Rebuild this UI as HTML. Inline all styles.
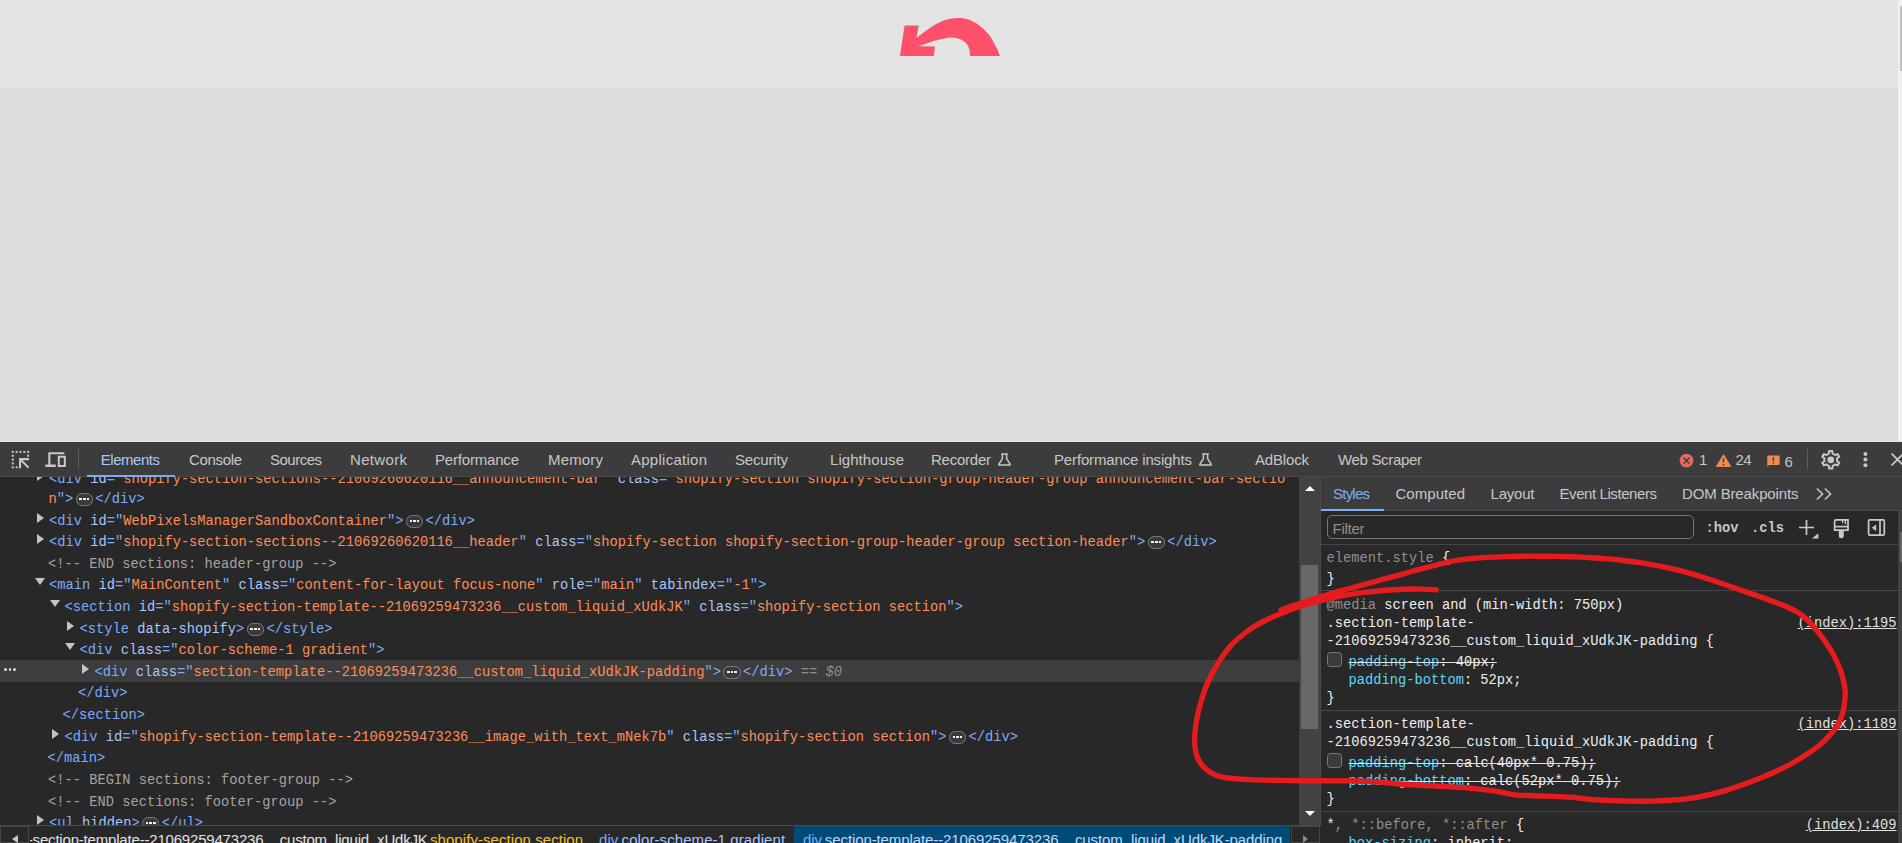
<!DOCTYPE html>
<html><head><meta charset="utf-8"><title>DevTools</title>
<style>
html,body{margin:0;padding:0;width:1902px;height:843px;overflow:hidden;background:#282828;}
body{position:relative;font-family:"Liberation Sans",sans-serif;}
.abs{position:absolute}
.tab{position:absolute;white-space:nowrap;line-height:20px;height:20px;font-family:"Liberation Sans",sans-serif;}
.ln{position:absolute;white-space:pre;font-family:"Liberation Mono",monospace;font-size:13.74px;line-height:22px;height:22px;color:#7cacf8;}
.t{color:#7cacf8}.an{color:#a8c7fa}.av{color:#fe8d59}.cm{color:#a3a3a3}.w{color:#e3e3e3}.g{color:#8f8f8f}
.pn{color:#5cd5fb}
.st{text-decoration:line-through;text-decoration-color:#e0e0e0}
.el{display:inline-block;position:relative;width:22.1px;height:0;vertical-align:baseline}
.el b{position:absolute;left:2.4px;top:-9.4px;width:17.4px;height:12.4px;box-sizing:border-box;border:1px solid #7a7a7a;border-radius:6.2px;background:#3a3a3a}
.el i{position:absolute;top:4.2px;width:2.5px;height:2px;background:#f0f0f0}
.tri{position:absolute;width:0;height:0;border-style:solid}
.sl{position:absolute;white-space:pre;font-family:"Liberation Mono",monospace;font-size:13.74px;line-height:18px;height:18px;color:#eeeeee;}
.lk{position:absolute;white-space:pre;font-family:"Liberation Mono",monospace;font-size:13.74px;line-height:18px;height:18px;color:#e0e0e0;text-decoration:underline;}
.cb{position:absolute;width:15px;height:15px;box-sizing:border-box;border:1.3px solid #787878;border-radius:3.5px;background:#3b3b3b}
.sep{position:absolute;height:1px;background:#454545}
</style></head><body>

<div class="abs" style="left:0;top:0;width:1898px;height:88px;background:#e3e3e3"></div>
<div class="abs" style="left:0;top:88px;width:1898px;height:354px;background:#dcdcdc"></div>
<div class="abs" style="left:1898px;top:0;width:4px;height:442px;background:#f1f1f1"></div>
<div class="abs" style="left:1900px;top:6px;width:2px;height:65px;background:#c1c1c1"></div>
<svg class="abs" style="left:895px;top:10px" width="112" height="52" viewBox="895 10 112 52">
<path d="M899.9 55.9 L904.6 25.4 L918.6 25.4 L916.5 37.9  C918.0 36.8 922.3 33.3 925.6 31.0 C928.9 28.7 932.8 25.9 936.3 24.0 C939.8 22.1 943.3 20.5 946.9 19.5 C950.5 18.5 954.0 18.0 957.6 18.0 C961.2 18.0 964.7 18.4 968.3 19.6 C971.9 20.8 975.9 22.9 979.3 25.4 C982.7 27.9 986.0 31.1 988.8 34.6 C991.5 38.1 993.9 43.1 995.8 46.6 C997.7 50.1 999.3 54.4 1000.0 55.9 L970.1 55.9  C970.0 54.9 969.9 51.8 969.4 49.8 C968.9 47.8 968.1 45.8 966.9 44.1 C965.6 42.5 964.0 41.0 961.9 39.9 C959.8 38.8 956.6 38.0 954.1 37.7 C951.6 37.4 949.9 37.5 946.9 37.9 C943.9 38.3 939.8 39.2 936.3 40.2 C932.8 41.2 928.6 42.8 925.6 43.8 C922.6 44.8 919.7 45.9 918.5 46.3 L935 46.4 L933.8 55.9 Z" fill="#fe4f6b"/>
</svg>
<div class="abs" style="left:0;top:442px;width:1902px;height:35px;background:#3c3c3c"></div>
<div class="abs" style="left:0;top:441px;width:1902px;height:1px;background:#e8e8e8"></div>
<svg class="abs" style="left:8px;top:446px" width="26" height="26" viewBox="8 446 26 26" fill="#c9c9c9"><rect x="11.75" y="450.90" width="2" height="2"/><rect x="15.60" y="450.90" width="2" height="2"/><rect x="19.45" y="450.90" width="2" height="2"/><rect x="23.30" y="450.90" width="2" height="2"/><rect x="27.15" y="450.90" width="2" height="2"/><rect x="11.75" y="454.75" width="2" height="2"/><rect x="11.75" y="458.60" width="2" height="2"/><rect x="11.75" y="462.40" width="2" height="2"/><rect x="11.75" y="466.30" width="2" height="2"/><rect x="27.15" y="454.75" width="2" height="2"/><rect x="15.60" y="466.30" width="2" height="2"/><path d="M19 458.1H29.1V460.2H22.6L29.3 466.9L27.9 468.4L21.1 461.6V468.2H19Z"/></svg>
<svg class="abs" style="left:44px;top:448px" width="24" height="22" viewBox="44 448 24 22" fill="#c9c9c9"><path d="M48.3 452.2H64.4V454.2H50.4V464.6H55.75V467H45.4V464.6H48.3Z"/><path fill-rule="evenodd" d="M57.8 455.7H65.8V467.1H57.8ZM59.8 457.7V465.1H63.8V457.7Z"/></svg>
<div class="abs" style="left:78px;top:449px;width:1px;height:20px;background:#5c5c5c"></div>
<div class="abs" style="left:87px;top:475px;width:88px;height:2px;z-index:5;background:#7cacf8"></div>
<div class="tab" style="left:100.7px;top:450px;color:#a8c7fa;font-size:15px;letter-spacing:-0.447px">Elements</div>
<div class="tab" style="left:189px;top:450px;color:#c7c7c7;font-size:15px;letter-spacing:-0.342px">Console</div>
<div class="tab" style="left:270px;top:450px;color:#c7c7c7;font-size:15px;letter-spacing:-0.505px">Sources</div>
<div class="tab" style="left:350px;top:450px;color:#c7c7c7;font-size:15px;letter-spacing:0.330px">Network</div>
<div class="tab" style="left:435px;top:450px;color:#c7c7c7;font-size:15px;letter-spacing:-0.188px">Performance</div>
<div class="tab" style="left:548px;top:450px;color:#c7c7c7;font-size:15px;letter-spacing:0.166px">Memory</div>
<div class="tab" style="left:631px;top:450px;color:#c7c7c7;font-size:15px;letter-spacing:0.261px">Application</div>
<div class="tab" style="left:735px;top:450px;color:#c7c7c7;font-size:15px;letter-spacing:-0.170px">Security</div>
<div class="tab" style="left:830px;top:450px;color:#c7c7c7;font-size:15px;letter-spacing:0.066px">Lighthouse</div>
<div class="tab" style="left:931px;top:450px;color:#c7c7c7;font-size:15px;letter-spacing:-0.243px">Recorder</div>
<div class="tab" style="left:1054px;top:450px;color:#c7c7c7;font-size:15px;letter-spacing:-0.153px">Performance insights</div>
<div class="tab" style="left:1255px;top:450px;color:#c7c7c7;font-size:15px;letter-spacing:-0.172px">AdBlock</div>
<div class="tab" style="left:1338px;top:450px;color:#c7c7c7;font-size:15px;letter-spacing:-0.327px">Web Scraper</div>
<svg class="abs" style="left:996.6px;top:451px" width="16" height="17" viewBox="0 0 16 17" fill="none" stroke="#c9c9c9" stroke-width="1.5" stroke-linejoin="round"><path d="M4.2 3h6.6M5.4 3v4.6L1.9 13.2a.6.6 0 0 0 .5.9h10.2a.6.6 0 0 0 .5-.9L9.6 7.6V3"/></svg>
<svg class="abs" style="left:1198.2px;top:451px" width="16" height="17" viewBox="0 0 16 17" fill="none" stroke="#c9c9c9" stroke-width="1.5" stroke-linejoin="round"><path d="M4.2 3h6.6M5.4 3v4.6L1.9 13.2a.6.6 0 0 0 .5.9h10.2a.6.6 0 0 0 .5-.9L9.6 7.6V3"/></svg>
<svg class="abs" style="left:1676px;top:450px" width="120" height="22" viewBox="1676 450 120 22">
<circle cx="1686.5" cy="460.6" r="6.9" fill="#e46962"/>
<path d="M1683.7 457.8l5.6 5.6M1689.3 457.8l-5.6 5.6" stroke="#3c3c3c" stroke-width="1.35" fill="none"/>
<path d="M1723.55 454.6L1730.8 466.5H1716.3Z" fill="#f28b50" stroke="#f28b50" stroke-width="0.8" stroke-linejoin="round"/>
<path d="M1723.5 458.3v4" stroke="#3c3c3c" stroke-width="1.5"/><circle cx="1723.5" cy="464.6" r="0.9" fill="#3c3c3c"/>
<path d="M1767.3 456.4a0.9 0.9 0 0 1 .9-.9h10.5a0.9 0.9 0 0 1 .9.9v7.7a0.9 0.9 0 0 1-.9.9h-9.7l-1.7 2z" fill="#f28b50"/>
<path d="M1773.4 457.3v4" stroke="#3c3c3c" stroke-width="1.5"/><circle cx="1773.4" cy="463" r="0.85" fill="#3c3c3c"/>
</svg>
<div class="tab" style="left:1699px;top:450px;color:#c7c7c7;font-size:15px">1</div>
<div class="tab" style="left:1735.5px;top:450px;color:#c7c7c7;font-size:15px;letter-spacing:-0.6px">24</div>
<div class="tab" style="left:1784.5px;top:452px;color:#c7c7c7;font-size:15px">6</div>
<div class="abs" style="left:1807px;top:449px;width:1px;height:20px;background:#5e5e5e"></div>
<svg class="abs" style="left:1818.8px;top:447.75px" width="23.52" height="23.52" viewBox="0 0 24 24"><path fill="#c9c9c9" fill-rule="evenodd" d="M19.43 12.98c.04-.32.07-.64.07-.98 0-.34-.03-.66-.07-.98l2.11-1.65c.19-.15.24-.42.12-.64l-2-3.46c-.09-.16-.26-.25-.44-.25-.06 0-.12.01-.17.03l-2.49 1c-.52-.4-1.08-.73-1.69-.98l-.38-2.65C14.46 2.18 14.25 2 14 2h-4c-.25 0-.46.18-.49.42l-.38 2.65c-.61.25-1.17.59-1.69.98l-2.49-1c-.06-.02-.12-.03-.18-.03-.17 0-.34.09-.43.25l-2 3.46c-.13.22-.07.49.12.64l2.11 1.65c-.04.32-.07.65-.07.98 0 .33.03.66.07.98l-2.11 1.65c-.19.15-.24.42-.12.64l2 3.46c.09.16.26.25.44.25.06 0 .12-.01.17-.03l2.49-1c.52.4 1.08.73 1.69.98l.38 2.65c.03.24.24.42.49.42h4c.25 0 .46-.18.49-.42l.38-2.65c.61-.25 1.17-.59 1.69-.98l2.49 1c.06.02.12.03.18.03.17 0 .34-.09.43-.25l2-3.46c.12-.22.07-.49-.12-.64l-2.11-1.65zm-1.98-1.71c.04.31.05.52.05.73 0 .21-.02.43-.05.73l-.14 1.13.89.7 1.08.84-.7 1.21-1.27-.51-1.04-.42-.9.68c-.43.32-.84.56-1.25.73l-1.06.43-.16 1.13-.2 1.35h-1.4l-.19-1.35-.16-1.13-1.06-.43c-.43-.18-.83-.41-1.23-.71l-.91-.7-1.06.43-1.27.51-.7-1.21 1.08-.84.89-.7-.14-1.13c-.03-.31-.05-.54-.05-.74s.02-.43.05-.73l.14-1.13-.89-.7-1.08-.84.7-1.21 1.27.51 1.04.42.9-.68c.43-.32.84-.56 1.25-.73l1.06-.43.16-1.13.2-1.35h1.39l.19 1.35.16 1.13 1.06.43c.43.18.83.41 1.23.71l.91.7 1.06-.43 1.27-.51.7 1.21-1.07.85-.89.7.14 1.13z"/><circle cx="12" cy="12" r="3.45" fill="#c9c9c9"/></svg>
<svg class="abs" style="left:1860px;top:450px" width="12" height="20" viewBox="1860 450 12 20" fill="#c7c7c7"><circle cx="1865.4" cy="453.9" r="2"/><circle cx="1865.4" cy="459.6" r="2"/><circle cx="1865.4" cy="465.3" r="2"/></svg>
<svg class="abs" style="left:1888px;top:450px" width="14" height="20" viewBox="1888 450 14 20"><path d="M1891.6 453.6l11.8 11.8M1903.4 453.6l-11.8 11.8" stroke="#c9c9c9" stroke-width="1.7" fill="none"/></svg>
<div class="abs" style="left:0;top:476px;width:1902px;height:1px;background:#4a4a4a"></div>
<div class="abs" style="left:0;top:477px;width:1299px;height:349px;overflow:hidden">
<div class="abs" style="left:0;top:183.00px;width:1299px;height:22px;background:#3d3d3d"></div>
<div class="abs" style="left:4px;top:191.44px;width:14px;height:3px"><i class="abs" style="left:0;top:0;width:2.5px;height:2.5px;background:#dcdcdc;border-radius:2px"></i><i class="abs" style="left:4.5px;top:0;width:2.5px;height:2.5px;background:#dcdcdc;border-radius:2px"></i><i class="abs" style="left:9px;top:0;width:2.5px;height:2.5px;background:#dcdcdc;border-radius:2px"></i></div>
<div class="ln" style="left:49px;top:-7.96px"><span class="t">&lt;div </span><span class="an">id</span><span class="t">=&quot;</span><span class="av">shopify-section-sections--21069260620116__announcement-bar</span><span class="t">&quot; </span><span class="an">class</span><span class="t">=&quot;</span><span class="av">shopify-section shopify-section-group-header-group announcement-bar-sectio</span></div>
<div class="tri" style="left:36.6px;top:-5.80px;border-width:5.15px 0 5.15px 7.8px;border-color:transparent transparent transparent #c4c4c4"></div>
<div class="ln" style="left:48.5px;top:11.64px"><span class="av">n</span><span class="t">&quot;&gt;</span><span class="el"><b><i style="left:2.7px"></i><i style="left:6.4px"></i><i style="left:10.1px"></i></b></span><span class="t">&lt;/div&gt;</span></div>
<div class="ln" style="left:49px;top:33.64px"><span class="t">&lt;div</span> <span class="an">id</span><span class="t">=&quot;</span><span class="av">WebPixelsManagerSandboxContainer</span><span class="t">&quot;</span><span class="t">&gt;</span><span class="el"><b><i style="left:2.7px"></i><i style="left:6.4px"></i><i style="left:10.1px"></i></b></span><span class="t">&lt;/div&gt;</span></div>
<div class="tri" style="left:36.6px;top:35.80px;border-width:5.15px 0 5.15px 7.8px;border-color:transparent transparent transparent #c4c4c4"></div>
<div class="ln" style="left:49px;top:54.64px"><span class="t">&lt;div</span> <span class="an">id</span><span class="t">=&quot;</span><span class="av">shopify-section-sections--21069260620116__header</span><span class="t">&quot;</span> <span class="an">class</span><span class="t">=&quot;</span><span class="av">shopify-section shopify-section-group-header-group section-header</span><span class="t">&quot;</span><span class="t">&gt;</span><span class="el"><b><i style="left:2.7px"></i><i style="left:6.4px"></i><i style="left:10.1px"></i></b></span><span class="t">&lt;/div&gt;</span></div>
<div class="tri" style="left:36.6px;top:56.80px;border-width:5.15px 0 5.15px 7.8px;border-color:transparent transparent transparent #c4c4c4"></div>
<div class="ln" style="left:48px;top:76.64px"><span class="cm">&lt;!-- END sections: header-group --&gt;</span></div>
<div class="ln" style="left:49px;top:97.64px"><span class="t">&lt;main</span> <span class="an">id</span><span class="t">=&quot;</span><span class="av">MainContent</span><span class="t">&quot;</span> <span class="an">class</span><span class="t">=&quot;</span><span class="av">content-for-layout focus-none</span><span class="t">&quot;</span> <span class="an">role</span><span class="t">=&quot;</span><span class="av">main</span><span class="t">&quot;</span> <span class="an">tabindex</span><span class="t">=&quot;</span><span class="av">-1</span><span class="t">&quot;</span><span class="t">&gt;</span></div>
<div class="tri" style="left:34.7px;top:100.94px;border-width:7.4px 5.2px 0 5.2px;border-color:#c4c4c4 transparent transparent transparent"></div>
<div class="ln" style="left:64.5px;top:119.64px"><span class="t">&lt;section</span> <span class="an">id</span><span class="t">=&quot;</span><span class="av">shopify-section-template--21069259473236__custom_liquid_xUdkJK</span><span class="t">&quot;</span> <span class="an">class</span><span class="t">=&quot;</span><span class="av">shopify-section section</span><span class="t">&quot;</span><span class="t">&gt;</span></div>
<div class="tri" style="left:50.2px;top:122.94px;border-width:7.4px 5.2px 0 5.2px;border-color:#c4c4c4 transparent transparent transparent"></div>
<div class="ln" style="left:79.5px;top:141.64px"><span class="t">&lt;style</span> <span class="an">data-shopify</span><span class="t">&gt;</span><span class="el"><b><i style="left:2.7px"></i><i style="left:6.4px"></i><i style="left:10.1px"></i></b></span><span class="t">&lt;/style&gt;</span></div>
<div class="tri" style="left:67.1px;top:143.80px;border-width:5.15px 0 5.15px 7.8px;border-color:transparent transparent transparent #c4c4c4"></div>
<div class="ln" style="left:79.5px;top:162.64px"><span class="t">&lt;div</span> <span class="an">class</span><span class="t">=&quot;</span><span class="av">color-scheme-1 gradient</span><span class="t">&quot;</span><span class="t">&gt;</span></div>
<div class="tri" style="left:65.2px;top:165.94px;border-width:7.4px 5.2px 0 5.2px;border-color:#c4c4c4 transparent transparent transparent"></div>
<div class="ln" style="left:94.5px;top:184.64px"><span class="t">&lt;div</span> <span class="an">class</span><span class="t">=&quot;</span><span class="av">section-template--21069259473236__custom_liquid_xUdkJK-padding</span><span class="t">&quot;</span><span class="t">&gt;</span><span class="el"><b><i style="left:2.7px"></i><i style="left:6.4px"></i><i style="left:10.1px"></i></b></span><span class="t">&lt;/div&gt;</span><span class="g"> == </span><span class="g" style="font-style:italic">$0</span></div>
<div class="tri" style="left:82.1px;top:186.80px;border-width:5.15px 0 5.15px 7.8px;border-color:transparent transparent transparent #c4c4c4"></div>
<div class="ln" style="left:78px;top:205.64px"><span class="t">&lt;/div&gt;</span></div>
<div class="ln" style="left:62.5px;top:227.64px"><span class="t">&lt;/section&gt;</span></div>
<div class="ln" style="left:64.5px;top:249.64px"><span class="t">&lt;div</span> <span class="an">id</span><span class="t">=&quot;</span><span class="av">shopify-section-template--21069259473236__image_with_text_mNek7b</span><span class="t">&quot;</span> <span class="an">class</span><span class="t">=&quot;</span><span class="av">shopify-section section</span><span class="t">&quot;</span><span class="t">&gt;</span><span class="el"><b><i style="left:2.7px"></i><i style="left:6.4px"></i><i style="left:10.1px"></i></b></span><span class="t">&lt;/div&gt;</span></div>
<div class="tri" style="left:52.1px;top:251.80px;border-width:5.15px 0 5.15px 7.8px;border-color:transparent transparent transparent #c4c4c4"></div>
<div class="ln" style="left:47.5px;top:270.64px"><span class="t">&lt;/main&gt;</span></div>
<div class="ln" style="left:48px;top:292.64px"><span class="cm">&lt;!-- BEGIN sections: footer-group --&gt;</span></div>
<div class="ln" style="left:48px;top:314.64px"><span class="cm">&lt;!-- END sections: footer-group --&gt;</span></div>
<div class="ln" style="left:49px;top:335.64px"><span class="t">&lt;ul</span> <span class="an">hidden</span><span class="t">&gt;</span><span class="el"><b><i style="left:2.7px"></i><i style="left:6.4px"></i><i style="left:10.1px"></i></b></span><span class="t">&lt;/ul&gt;</span></div>
<div class="tri" style="left:36.6px;top:337.80px;border-width:5.15px 0 5.15px 7.8px;border-color:transparent transparent transparent #c4c4c4"></div>
</div>
<div class="abs" style="left:1299px;top:477px;width:21px;height:348px;background:#424242"></div>
<div class="abs" style="left:1301px;top:565px;width:17px;height:163.5px;background:#686868"></div>
<div class="tri" style="left:1304.5px;top:486px;border-width:0 5px 5px 5px;border-color:transparent transparent #fff transparent"></div>
<div class="tri" style="left:1304.5px;top:811px;border-width:5px 5px 0 5px;border-color:#fff transparent transparent transparent"></div>
<div class="abs" style="left:1320px;top:477px;width:1px;height:366px;background:#4a4a4a"></div>
<div class="abs" style="left:0;top:825px;width:1321px;height:1px;background:#4a4a4a"></div>
<div class="abs" style="left:0;top:826px;width:1321px;height:17px;background:#282828"></div>
<div class="abs" style="left:0;top:826px;width:29px;height:17px;background:#282828;border:1px solid #454545;box-sizing:border-box"></div>
<div class="tri" style="left:12px;top:835px;border-width:4.5px 6px 4.5px 0;border-color:transparent #c7c7c7 transparent transparent"></div>
<div class="abs" style="left:794px;top:826px;width:496px;height:17px;background:#004a77"></div>
<div class="abs" style="left:1291px;top:826px;width:29px;height:17px;background:#282828;border:1px solid #454545;box-sizing:border-box"></div>
<div class="tri" style="left:1303px;top:834.8px;border-width:4.5px 0 4.5px 5.5px;border-color:transparent transparent transparent #8a8a8a"></div>
<div class="abs" style="left:30px;top:826px;width:764px;height:17px;overflow:hidden">
<div class="tab" style="left:-2.2px;top:4px;font-size:15px;color:#e3e3e3;letter-spacing:-0.19px" id="bc1">-section-template--21069259473236__custom_liquid_xUdkJK</div>
</div>
<div class="tab" style="left:430px;top:830px;font-size:15px;letter-spacing:0.06px;color:#e3e3e3"><span style="color:#f2c230">shopify-section.section</span></div>
<div class="tab" style="left:599px;top:830px;font-size:15px;letter-spacing:0.08px;color:#e3e3e3"><span style="color:#7cacf8">div</span><span style="color:#a8c7fa">.color-scheme-1.gradient</span></div>
<div class="tab" style="left:803px;top:830px;font-size:15px;letter-spacing:-0.1px;color:#e3e3e3"><span style="color:#7cacf8">div</span><span style="color:#c0d8f8">.section-template--21069259473236__custom_liquid_xUdkJK-padding</span></div>
<div class="abs" style="left:1321px;top:477px;width:581px;height:33px;background:#3c3c3c"></div>
<div class="abs" style="left:1321px;top:510px;width:581px;height:1px;background:#4a4a4a"></div>
<div class="abs" style="left:1321px;top:509px;width:63px;height:2px;background:#7cacf8;z-index:3"></div>
<div class="tab" style="left:1333px;top:483.5px;color:#7cacf8;font-size:15px;letter-spacing:-0.772px">Styles</div>
<div class="tab" style="left:1395.5px;top:483.5px;color:#c7c7c7;font-size:15px;letter-spacing:0.040px">Computed</div>
<div class="tab" style="left:1490.5px;top:483.5px;color:#c7c7c7;font-size:15px;letter-spacing:-0.210px">Layout</div>
<div class="tab" style="left:1559.5px;top:483.5px;color:#c7c7c7;font-size:15px;letter-spacing:-0.421px">Event Listeners</div>
<div class="tab" style="left:1682px;top:483.5px;color:#c7c7c7;font-size:15px;letter-spacing:-0.134px">DOM Breakpoints</div>
<svg class="abs" style="left:1815px;top:487px" width="20" height="14" viewBox="0 0 20 14" fill="none" stroke="#c7c7c7" stroke-width="1.6"><path d="M2 1.5l5.5 5.5L2 12.5M10 1.5l5.5 5.5L10 12.5"/></svg>
<div class="abs" style="left:1321px;top:511px;width:581px;height:33px;background:#282828"></div>
<div class="abs" style="left:1327px;top:515px;width:367px;height:24px;border:1px solid #757575;border-radius:5px;box-sizing:border-box;background:#282828"></div>
<div class="tab" style="left:1332.5px;top:518.5px;color:#8f8f8f;font-size:15px;letter-spacing:-0.268px">Filter</div>
<div class="sl" style="left:1705.5px;top:520.2px;font-weight:bold;color:#c7c7c7">:hov</div>
<div class="sl" style="left:1751px;top:520.2px;font-weight:bold;color:#c7c7c7">.cls</div>
<svg class="abs" style="left:1796px;top:516px" width="26" height="26" viewBox="1796 516 26 26" fill="none" stroke="#c9c9c9" stroke-width="1.7"><path d="M1806.5 520v15M1799 527.5h15"/><path d="M1818.4 533.2v5.4h-6.4z" fill="#c9c9c9" stroke="none"/></svg>
<svg class="abs" style="left:1830px;top:516px" width="24" height="26" viewBox="1830 516 24 26" fill="none" stroke="#c9c9c9" stroke-width="1.7"><path d="M1836 519.9h12v10.2h-13.4v-8.8a1.4 1.4 0 0 1 1.4-1.4z"/><path d="M1834.6 526.6h13.4" /><path d="M1842.6 519.9v3.2M1845.4 519.9v4.4" stroke-width="1.4"/><path d="M1838.8 530.5h5v5.2a2.5 2.5 0 0 1-5 0z" fill="#c9c9c9" stroke="none"/></svg>
<svg class="abs" style="left:1864px;top:516px" width="26" height="24" viewBox="1864 516 26 24" fill="none" stroke="#c9c9c9" stroke-width="1.7"><rect x="1868.6" y="519.9" width="15.7" height="15.2" rx="1.2"/><path d="M1880 519.9v15.2"/><path d="M1876.2 524.5v6.6l-4.5-3.3z" fill="#c9c9c9" stroke="none"/></svg>
<div class="sep" style="left:1321px;top:544px;width:577px"></div>
<div class="sl" style="left:1326.5px;top:549.6px;"><span class="g">element.style</span> {</div>
<div class="sl" style="left:1326.5px;top:570.6px;">}</div>
<div class="sep" style="left:1321px;top:590px;width:577px"></div>
<div class="sl" style="left:1326.5px;top:596.6px;"><span class="g">@media</span> screen and (min-width: 750px)</div>
<div class="sl" style="left:1326.5px;top:614.6px;">.section-template-</div>
<div class="lk" style="left:1797.6px;top:614.6px">(index):1195</div>
<div class="sl" style="left:1326.5px;top:632.6px;">-21069259473236__custom_liquid_xUdkJK-padding {</div>
<div class="cb" style="left:1327px;top:652px"></div>
<div class="sl" style="left:1348.5px;top:653.6px;"><span class="st"><span class="pn">padding-top</span>: 40px;</span></div>
<div class="sl" style="left:1348.5px;top:671.6px;"><span class="pn">padding-bottom</span>: 52px;</div>
<div class="sl" style="left:1326.5px;top:689.6px;">}</div>
<div class="sep" style="left:1321px;top:710px;width:577px"></div>
<div class="sl" style="left:1326.5px;top:715.6px;">.section-template-</div>
<div class="lk" style="left:1797.6px;top:715.6px">(index):1189</div>
<div class="sl" style="left:1326.5px;top:733.6px;">-21069259473236__custom_liquid_xUdkJK-padding {</div>
<div class="cb" style="left:1327px;top:753px"></div>
<div class="sl" style="left:1348.5px;top:754.6px;"><span class="st"><span class="pn">padding-top</span>: calc(40px* 0.75);</span></div>
<div class="sl" style="left:1348.5px;top:772.6px;"><span class="st"><span class="pn">padding-bottom</span>: calc(52px* 0.75);</span></div>
<div class="sl" style="left:1326.5px;top:790.6px;">}</div>
<div class="sep" style="left:1321px;top:811px;width:577px"></div>
<div class="sl" style="left:1326.5px;top:816.6px;">*<span class="g">, *::before, *::after</span> {</div>
<div class="lk" style="left:1805.8px;top:816.6px">(index):409</div>
<div class="sl" style="left:1348.5px;top:834.6px;"><span class="pn">box-sizing</span>: inherit;</div>
<div class="abs" style="left:1898px;top:511px;width:4px;height:332px;background:#424242"></div>
<div class="abs" style="left:1900px;top:532px;width:2px;height:30px;background:#686868"></div>
<svg class="abs" style="left:1180px;top:540px;pointer-events:none" width="722" height="303" viewBox="1180 540 722 303" fill="none" stroke="#e61b1e" stroke-linecap="round" stroke-linejoin="round">
<path stroke-width="5.4" d="M1436.1 589.8 C1433.6 589.7 1427.0 589.2 1421.4 589.1 C1415.8 589.0 1408.8 589.1 1402.5 589.3 C1396.2 589.5 1389.9 590.0 1383.6 590.5 C1377.3 591.0 1370.9 591.6 1364.6 592.4 C1358.3 593.2 1352.0 594.1 1345.7 595.2 C1339.4 596.3 1333.1 597.5 1326.8 599.0 C1320.5 600.5 1314.2 602.1 1307.9 604.0 C1301.6 605.9 1295.2 608.2 1288.9 610.6 C1282.6 613.0 1275.5 615.7 1270.0 618.2 C1264.5 620.7 1260.5 622.9 1256.2 625.4 C1251.9 627.9 1248.2 630.4 1244.3 633.5 C1240.3 636.6 1236.0 640.2 1232.5 643.9 C1229.0 647.6 1226.0 651.6 1223.0 655.8 C1220.0 659.9 1217.3 664.2 1214.7 668.8 C1212.1 673.3 1209.7 678.0 1207.5 683.1 C1205.3 688.2 1203.3 694.2 1201.6 699.7 C1199.9 705.2 1198.4 710.8 1197.3 716.3 C1196.2 721.8 1195.4 727.8 1195.0 732.9 C1194.6 738.0 1194.5 742.9 1195.0 747.2 C1195.5 751.6 1196.4 755.5 1198.1 759.0 C1199.8 762.5 1202.2 765.8 1205.2 768.5 C1208.2 771.2 1211.4 773.5 1215.9 775.2 C1220.5 776.9 1225.8 777.7 1232.5 778.5 C1239.2 779.3 1248.3 779.6 1256.2 779.9 C1264.1 780.2 1272.0 780.3 1279.9 780.4 C1287.8 780.5 1296.6 780.7 1303.7 780.7 C1310.8 780.8 1314.0 780.7 1322.6 780.7 C1331.2 780.7 1345.7 780.7 1355.2 780.9 C1364.7 781.1 1371.6 781.5 1379.7 782.1 C1387.8 782.7 1394.6 783.6 1404.1 784.3 C1413.6 785.0 1425.8 785.5 1436.7 786.1 C1447.6 786.7 1459.8 787.3 1469.3 788.1 C1478.8 788.9 1486.2 789.8 1493.8 790.9 C1501.4 792.0 1508.1 794.1 1514.9 794.9 C1521.7 795.7 1525.8 795.4 1534.5 795.7 C1543.2 796.1 1557.8 796.4 1567.1 797.0 C1576.3 797.6 1584.7 798.8 1590.0 799.3 C1595.3 799.8 1594.5 799.8 1598.9 800.0 C1603.4 800.2 1610.8 800.5 1616.7 800.7 C1622.6 800.9 1628.6 801.0 1634.5 801.1 C1640.4 801.2 1646.4 801.2 1652.3 801.1 C1658.2 801.0 1664.2 800.7 1670.1 800.3 C1676.0 799.9 1682.0 799.4 1687.9 798.6 C1693.8 797.8 1699.8 796.8 1705.7 795.5 C1711.6 794.2 1717.6 792.8 1723.5 791.1 C1729.4 789.4 1735.4 787.3 1741.3 785.2 C1747.2 783.1 1753.2 780.9 1759.1 778.5 C1765.0 776.1 1771.3 773.6 1776.9 771.0 C1782.5 768.4 1787.9 765.8 1792.9 763.0 C1797.9 760.2 1802.6 757.1 1807.1 754.1 C1811.5 751.1 1815.7 748.5 1819.6 745.2 C1823.5 741.9 1827.2 738.1 1830.3 734.5 C1833.4 730.9 1836.2 727.4 1838.3 723.8 C1840.4 720.2 1841.6 717.0 1842.7 713.1 C1843.8 709.2 1844.4 704.2 1844.8 700.7 C1845.2 697.2 1845.3 694.8 1845.2 692.0 C1845.1 689.2 1844.8 687.2 1844.1 683.8 C1843.4 680.4 1842.3 675.5 1840.9 671.4 C1839.5 667.2 1837.7 663.1 1835.6 658.9 C1833.5 654.7 1831.2 650.5 1828.5 646.4 C1825.8 642.2 1822.9 638.1 1819.6 634.0 C1816.3 629.9 1812.5 625.1 1808.9 621.5 C1805.3 617.9 1802.1 615.1 1798.2 612.6 C1794.3 610.1 1790.8 608.6 1785.8 606.4 C1780.8 604.2 1773.9 601.8 1768.0 599.6 C1762.1 597.4 1756.1 595.5 1750.2 593.4 C1744.3 591.3 1738.3 589.3 1732.4 587.2 C1726.5 585.1 1720.5 583.0 1714.6 581.0 C1708.7 579.0 1702.7 577.1 1696.8 575.3 C1690.9 573.5 1684.9 571.9 1679.0 570.4 C1673.1 568.9 1667.1 567.6 1661.2 566.4 C1655.3 565.2 1649.3 564.2 1643.4 563.2 C1637.5 562.2 1631.5 561.4 1625.6 560.7 C1619.7 560.0 1613.7 559.4 1607.8 558.9 C1601.9 558.4 1594.4 557.9 1590.0 557.6 C1585.6 557.3 1586.0 557.3 1581.4 557.1 C1576.8 556.9 1568.8 556.6 1562.5 556.5 C1556.2 556.4 1549.9 556.2 1543.6 556.2 C1537.3 556.2 1530.9 556.1 1524.6 556.2 C1518.3 556.3 1512.0 556.4 1505.7 556.6 C1499.4 556.8 1493.1 557.0 1486.8 557.4 C1480.5 557.8 1474.2 558.2 1467.9 558.9 C1461.6 559.6 1454.4 560.7 1448.9 561.8 C1443.4 562.9 1439.6 564.3 1435.0 565.5 C1430.4 566.7 1426.8 567.3 1421.4 568.8 C1416.0 570.2 1408.8 572.5 1402.5 574.2 C1396.2 575.9 1389.9 577.5 1383.6 579.2 C1377.3 580.9 1370.9 582.7 1364.6 584.4 C1358.3 586.1 1352.0 587.8 1345.7 589.5 C1339.4 591.2 1333.1 592.9 1326.8 594.8 C1320.5 596.7 1314.2 598.7 1307.9 600.7 C1301.6 602.8 1293.4 605.6 1288.9 607.1 C1284.4 608.6 1282.3 609.5 1281.0 610.0"/>
</svg>
</body></html>
